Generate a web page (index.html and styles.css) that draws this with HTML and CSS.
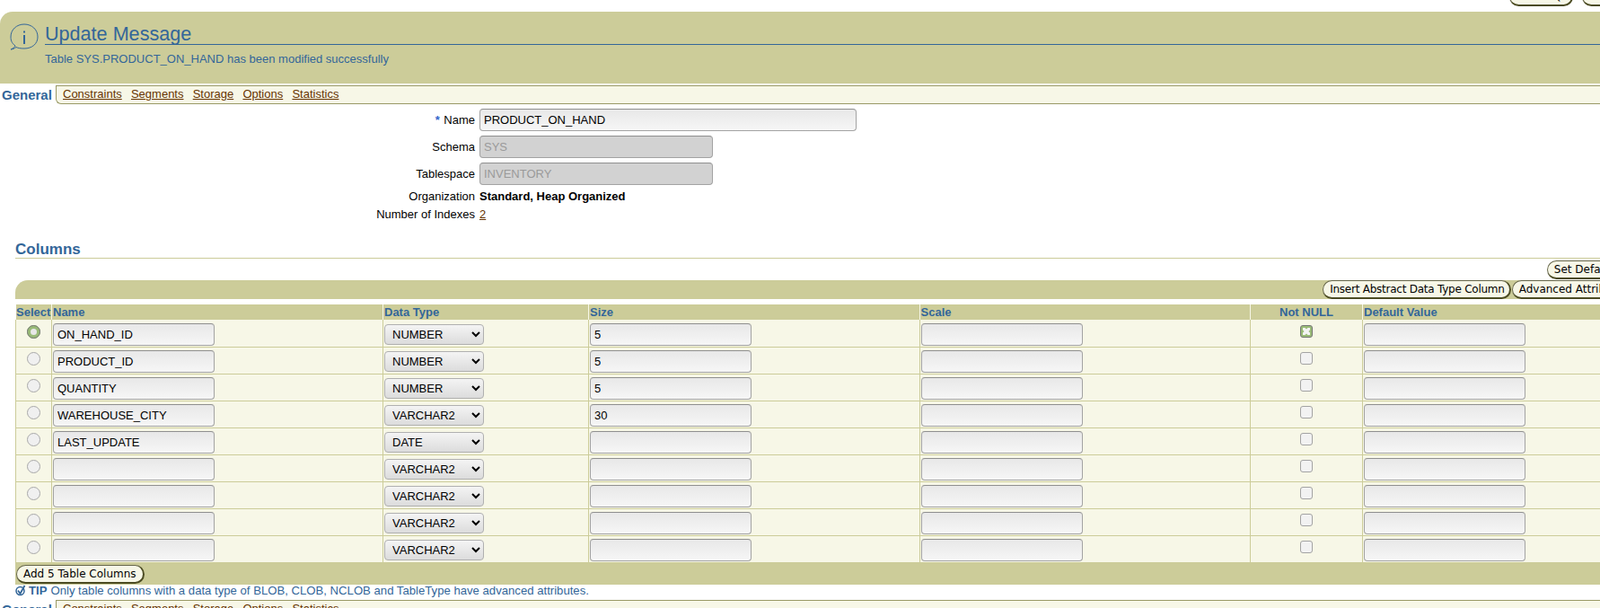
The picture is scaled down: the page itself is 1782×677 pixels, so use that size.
FILE: index.html
```html
<!DOCTYPE html>
<html lang="en">

<head>
	<meta charset="UTF-8">
	<title>Edit Table</title>
	<link rel="stylesheet" href="styles.css">
</head>

<body>
<div class="page">

	<div class="topButtons">
		<button class="btn showSql">Show SQL</button>
		<button class="btn">Revert</button>
		<button class="btn">Apply</button>
	</div>

	<div class="banner">
		<svg class="infoIcon" width="32" height="31" viewBox="0 0 32 31">
			<path d="M6 25 C2 22 1 19 1 15 C1 7 7.500 1 16 1 C24.500 1 31 7 31 15 C31 23 24.500 28 16 28 C12 28 9 27.500 7 26.500 C5 28 3 29 1 29 C3 28 5.500 27 6 25 Z" fill="none" stroke="#336699" stroke-width="1"/>
			<rect x="15" y="8.500" width="2" height="2" fill="#336699"/>
			<rect x="15" y="13" width="2" height="10" fill="#336699"/>
		</svg>
		<div class="bannerText">
			<h1>Update Message</h1>
			<p>Table SYS.PRODUCT_ON_HAND has been modified successfully</p>
		</div>
	</div>

	<div class="tabs">
		<span class="tabCurrent">General</span>
		<div class="tabBar">
			<a href="#">Constraints</a>
			<a href="#">Segments</a>
			<a href="#">Storage</a>
			<a href="#">Options</a>
			<a href="#">Statistics</a>
		</div>
	</div>

	<div class="form">
		<div class="formRow"><label><span class="req">*</span> Name</label><input class="field wide" type="text" value="PRODUCT_ON_HAND"></div>
		<div class="formRow"><label>Schema</label><input class="field medium" type="text" value="SYS" disabled></div>
		<div class="formRow"><label>Tablespace</label><input class="field medium" type="text" value="INVENTORY" disabled></div>
		<div class="formRow textRow"><label>Organization</label><b>Standard, Heap Organized</b></div>
		<div class="formRow textRow"><label>Number of Indexes</label><a href="#">2</a></div>
	</div>

	<h2 class="sectionHead">Columns</h2>

	<div class="setDefault">
		<button class="btn">Set Default LOB Attributes</button>
	</div>

	<div class="tableBar">
		<button class="btn insert">Insert Abstract Data Type Column</button>
		<button class="btn">Advanced Attributes</button>
	</div>

	<table class="columns">
		<colgroup>
			<col class="cSelect"><col class="cName"><col class="cType"><col class="cNum"><col class="cNum"><col class="cNull"><col>
		</colgroup>
		<thead>
			<tr>
				<th class="center">Select</th><th>Name</th><th>Data Type</th><th>Size</th><th>Scale</th><th class="center">Not NULL</th><th>Default Value</th>
			</tr>
		</thead>
		<tbody id="rows"></tbody>
	</table>

	<div class="tableFoot">
		<button class="btn">Add 5 Table Columns</button>
	</div>

	<div class="tip">
		<svg width="12" height="13" viewBox="0 0 12 13">
			<circle cx="5.500" cy="7" r="4.500" fill="none" stroke="#336699" stroke-width="1.500"/>
			<path d="M3 6.500 L5.500 10 L10.500 1" fill="none" stroke="#336699" stroke-width="1.800"/>
		</svg>
		<b>TIP</b> <span>Only table columns with a data type of BLOB, CLOB, NCLOB and TableType have advanced attributes.</span>
	</div>

	<div class="tabs bottomTabs">
		<span class="tabCurrent">General</span>
		<div class="tabBar">
			<a href="#">Constraints</a>
			<a href="#">Segments</a>
			<a href="#">Storage</a>
			<a href="#">Options</a>
			<a href="#">Statistics</a>
		</div>
	</div>

</div>

<script>
	// rows of the column table
	var data = [
		["ON_HAND_ID", "NUMBER", "5", true],
		["PRODUCT_ID", "NUMBER", "5", false],
		["QUANTITY", "NUMBER", "5", false],
		["WAREHOUSE_CITY", "VARCHAR2", "30", false],
		["LAST_UPDATE", "DATE", "", false],
		["", "VARCHAR2", "", false],
		["", "VARCHAR2", "", false],
		["", "VARCHAR2", "", false],
		["", "VARCHAR2", "", false]
	];
	var types = ["NUMBER", "VARCHAR2", "DATE"];
	var html = "";
	for (var i = 0; i < data.length; i++) {
		var r = data[i];
		var opts = "";
		for (var j = 0; j < types.length; j++) {
			opts += "<option" + (types[j] == r[1] ? " selected" : "") + ">" + types[j] + "</option>";
		}
		html += "<tr>"
			+ '<td class="center top"><span class="radio' + (i == 0 ? " on" : "") + '"></span></td>'
			+ '<td><input class="field" type="text" value="' + r[0] + '"></td>'
			+ '<td><select class="typeSelect">' + opts + "</select></td>"
			+ '<td><input class="field" type="text" value="' + r[2] + '"></td>'
			+ '<td><input class="field" type="text"></td>'
			+ '<td class="center top"><span class="check' + (r[3] ? " on" : "") + '"></span></td>'
			+ '<td><input class="field" type="text"></td>'
			+ "</tr>";
	}
	document.getElementById("rows").innerHTML = html;
</script>
</body>

</html>
```

FILE: styles.css
```css
* {
	box-sizing: border-box;
}
html, body {
	margin: 0;
	padding: 0;
	height: 100%;
	overflow: hidden;
	background: #fff;
}
.page {
	width: 1920px;
	font-family: "Liberation Sans", Arial, sans-serif;
	font-size: 13px;
	color: #000;
}
a {
	color: #663300;
}

/* buttons */
.btn {
	height: 21px;
	padding: 0 7px;
	font-family: "DejaVu Sans", sans-serif;
	font-size: 12px;
	color: #000;
	white-space: nowrap;
	background: #f7f7e7;
	border: 1px solid #66664a;
	border-right: 2px solid #4b4b22;
	border-bottom: 2px solid #4b4b22;
	border-radius: 11px;
}
.showSql {
	padding: 0 4px;
}
.insert {
	padding: 0 5px 0 7px;
	letter-spacing: -0.240px;
}

.topButtons {
	display: flex;
	justify-content: flex-end;
	gap: 10px;
	height: 13px;
	margin-top: -14px;
	padding-right: 41px;
}

/* message box */
.banner {
	display: flex;
	height: 80px;
	margin-top: 14px;
	padding: 13px 0 0 11px;
	background: #cccc99;
	border-top-left-radius: 14px;
}
.infoIcon {
	flex: none;
}
.bannerText {
	flex: 1;
	margin-left: 7px;
	color: #336699;
}
.bannerText h1 {
	height: 25px;
	margin: -1px 0 0;
	font-size: 21.600px;
	font-weight: normal;
	line-height: 25px;
	border-bottom: 1px solid #336699;
}
.bannerText p {
	margin: 8px 0 0;
	line-height: 16px;
}

/* tabs */
.tabs {
	display: flex;
	height: 21px;
	margin-top: 2px;
}
.tabCurrent {
	width: 62px;
	padding: 2px 0 0 2px;
	font-size: 15px;
	font-weight: bold;
	line-height: 18px;
	color: #336699;
}
.tabBar {
	flex: 1;
	display: flex;
	gap: 10.200px;
	padding: 1px 0 0 7px;
	background: #f7f7e7;
	border: 1px solid #999966;
	border-right: 0;
	border-bottom-left-radius: 6px;
	line-height: 16px;
}

/* form */
.form {
	margin-top: 5px;
}
.formRow {
	display: flex;
	align-items: center;
	height: 25px;
	margin-bottom: 5px;
}
.formRow label {
	width: 529px;
	margin-right: 5px;
	text-align: right;
}
.formRow .req {
	margin-right: 1px;
	font-weight: bold;
	color: #3366cc;
}
.textRow {
	height: 15px;
}
.field {
	width: 180px;
	height: 25px;
	padding: 0 4px;
	font-family: "Liberation Sans", Arial, sans-serif;
	font-size: 13px;
	color: #000;
	background: linear-gradient(#e8e8e8, #f6f6f6);
	border: 1px solid #a3a3a3;
	border-top-color: #8f8f8f;
	border-radius: 4px;
}
.field:disabled {
	color: #9a9a9a;
	background: #d2d2d2;
}
.wide {
	width: 420px;
}
.medium {
	width: 260px;
}

.sectionHead {
	height: 21px;
	margin: 21px 0 0 17px;
	font-size: 17px;
	line-height: 21px;
	color: #336699;
	border-bottom: 1px solid #cccc99;
}

.setDefault {
	display: flex;
	justify-content: flex-end;
	height: 24px;
	padding: 2px 22px 0 0;
}

.tableBar {
	display: flex;
	justify-content: flex-end;
	gap: 1px;
	height: 21px;
	margin-left: 17px;
	padding-right: 97px;
	background: #cccc99;
	border-top-left-radius: 14px;
}

/* column table */
.columns {
	width: 1903px;
	margin: 6px 0 0 17px;
	table-layout: fixed;
	border-collapse: collapse;
}
.cSelect { width: 40px; }
.cName { width: 369px; }
.cType { width: 229px; }
.cNum { width: 368.500px; }
.cNull { width: 125px; }
.columns th {
	height: 17px;
	padding: 0 0 1px 1px;
	font-size: 13px;
	line-height: 15px;
	text-align: left;
	color: #336699;
	background: #cccc99;
	border-left: 1px solid #f7f7e7;
}
.columns th:first-child {
	border-left: 0;
}
.columns td {
	height: 30px;
	padding: 3px 0 1px 1px;
	vertical-align: top;
	background: #f7f7e7;
	border: 1px solid #cccc99;
	border-top: 0;
}
.columns tbody tr:first-child td {
	padding-top: 4px;
	padding-bottom: 0;
}
.columns .center {
	padding-left: 0;
	text-align: center;
}
.columns .top,
.columns tbody tr:first-child .top {
	padding-top: 5px;
}
.columns tbody tr:first-child .top {
	padding-top: 6px;
}
.typeSelect {
	width: 111px;
	height: 23px;
	margin: 1px 0 0 0;
	padding-left: 4px;
	font-family: "Liberation Sans", Arial, sans-serif;
	font-size: 13px;
	color: #000;
	background: linear-gradient(#f4f4f4, #dcdcdc);
	border: 1px solid #b0b0b0;
	border-radius: 4px;
}
.radio {
	display: inline-block;
	width: 15px;
	height: 15px;
	background: #f0f0f0;
	border: 1px solid #a8a8a8;
	border-radius: 50%;
}
.radio.on {
	background: #e8e8e8;
	border: 4px solid #99bb77;
	outline: 1px solid #7a7a7a;
	outline-offset: -1px;
}
.check {
	display: inline-block;
	position: relative;
	width: 14px;
	height: 14px;
	background: #f2f2f2;
	border: 1px solid #a3a3a3;
	border-radius: 3px;
}
.check.on {
	background: #99bb77;
	border-color: #777;
}
.check.on:after {
	content: "";
	position: absolute;
	left: 2px;
	top: 2px;
	width: 8px;
	height: 8px;
	background: #f4f4f4;
	clip-path: polygon(0 0, 30% 0, 50% 20%, 70% 0, 100% 0, 100% 30%, 80% 50%, 100% 70%, 100% 100%, 70% 100%, 50% 80%, 30% 100%, 0 100%, 0 70%, 20% 50%, 0 30%);
}

.tableFoot {
	height: 24px;
	margin-left: 17px;
	padding: 2px 0 0 1px;
	background: #cccc99;
}

.tip {
	display: flex;
	align-items: center;
	gap: 3px;
	height: 15px;
	margin-left: 17px;
	padding-bottom: 2px;
	font-size: 13.150px;
	color: #336699;
}
.tip span {
	margin-left: 1px;
}
```
